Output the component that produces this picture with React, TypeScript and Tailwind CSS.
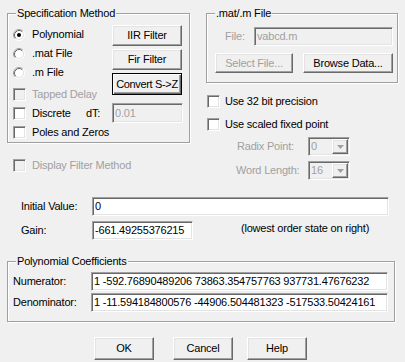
import React from "react";

const sunken =
  "border border-t-[#a0a0a0] border-l-[#a0a0a0] border-r-white border-b-white shadow-[inset_1px_1px_0_#696969,inset_-1px_-1px_0_#e3e3e3]";
const raised =
  "border border-t-white border-l-white border-r-[#696969] border-b-[#696969] shadow-[inset_-1px_-1px_0_#a0a0a0,inset_1px_1px_0_#e3e3e3] bg-[#f0f0f0]";
const dflt =
  "border border-black shadow-[inset_1px_1px_0_#fff,inset_-1px_-1px_0_#696969,inset_-2px_-2px_0_#a0a0a0] bg-[#f0f0f0]";

function Check({ disabled }: { disabled?: boolean }) {
  return (
    <span
      className={`block w-[13px] h-[13px] shrink-0 ${sunken} ${disabled ? "bg-[#f0f0f0]" : "bg-white"}`}
    />
  );
}

function Radio({ checked }: { checked?: boolean }) {
  return (
    <span className="flex w-[13px] shrink-0">
      <svg width="12" height="12" viewBox="0 0 12 12">
        <circle cx="6" cy="6" r="4.5" fill="#fff" />
        <path d="M2.11 9.89A5.5 5.5 0 0 1 9.89 2.11" stroke="#a0a0a0" fill="none" />
        <path d="M9.89 2.11A5.5 5.5 0 0 1 2.11 9.89" stroke="#fff" fill="none" />
        <path d="M2.82 9.18A4.5 4.5 0 0 1 9.18 2.82" stroke="#696969" fill="none" />
        <path d="M9.18 2.82A4.5 4.5 0 0 1 2.82 9.18" stroke="#e3e3e3" fill="none" />
        {checked && <circle cx="6" cy="6" r="2" fill="#000" />}
      </svg>
    </span>
  );
}

function Group({
  label,
  className,
  children,
}: {
  label: string;
  className: string;
  children?: React.ReactNode;
}) {
  return (
    <div
      className={`relative border border-[#a0a0a0] shadow-[1px_1px_0_#fff,inset_1px_1px_0_#fff] ${className}`}
    >
      <span className="absolute left-[8px] top-[-7px] bg-[#f0f0f0] px-[1px] leading-[13px] whitespace-nowrap">
        {label}
      </span>
      {children}
    </div>
  );
}

function Edit({
  value,
  className,
  disabled,
}: {
  value: string;
  className: string;
  disabled?: boolean;
}) {
  return (
    <div
      className={`flex items-center pl-[2px] whitespace-nowrap overflow-hidden ${sunken} ${
        disabled ? "bg-[#f0f0f0] text-[#a0a0a0]" : "bg-white text-black"
      } ${className}`}
    >
      {value}
    </div>
  );
}

function Btn({
  label,
  className,
  disabled,
  def,
}: {
  label: string;
  className: string;
  disabled?: boolean;
  def?: boolean;
}) {
  return (
    <div
      className={`flex items-center justify-center whitespace-nowrap ${def ? dflt : raised} ${
        disabled ? "text-[#a0a0a0]" : "text-black"
      } ${className}`}
    >
      {label}
    </div>
  );
}

function Combo({ value }: { value: string }) {
  return (
    <div className={`flex items-center w-[42px] h-[19px] bg-[#f0f0f0] ${sunken}`}>
      <span className="flex-1 pl-[2px] text-[#a0a0a0]">{value}</span>
      <span
        className={`flex items-center justify-center w-[16px] h-[15px] mr-[1px] ${raised}`}
      >
        <svg width="7" height="4" viewBox="0 0 7 4">
          <path d="M0 0H7L3.5 4Z" fill="#a0a0a0" />
        </svg>
      </span>
    </div>
  );
}

export default function App() {
  return (
    <div className="w-[405px] h-[362px] bg-[#f0f0f0] overflow-hidden pt-[13px] pl-[7px] text-[11px] leading-[13px] tracking-[-0.2px] text-black font-['Liberation_Sans',Arial,sans-serif]">
      {/* top area */}
      <div className="flex">
        {/* left column */}
        <div className="w-[183px]">
          <Group label="Specification Method" className="w-[183px] h-[130px]">
            <div className="pl-[5px] pt-[11px]">
              <div className="flex">
                <div className="w-[99px]">
                  <div className="flex items-center h-[19px] gap-[6px]">
                    <Radio checked />
                    <span>Polynomial</span>
                  </div>
                  <div className="flex items-center h-[19px] gap-[6px]">
                    <Radio />
                    <span>.mat File</span>
                  </div>
                  <div className="flex items-center h-[19px] gap-[6px]">
                    <Radio />
                    <span>.m File</span>
                  </div>
                  <div className="flex items-center h-[17px] mt-[4px] gap-[6px]">
                    <Check disabled />
                    <span className="text-[#a0a0a0] whitespace-nowrap">Tapped Delay</span>
                  </div>
                </div>
                <div className="flex flex-col gap-[3px] w-[70px]">
                  <Btn label="IIR Filter" className="h-[21px]" />
                  <Btn label="Fir Filter" className="h-[21px]" />
                  <Btn label="Convert S->Z" className="h-[22px] tracking-[-0.35px]" def />
                </div>
              </div>
              <div className="flex items-center h-[20px]">
                <Check />
                <span className="ml-[6px] w-[54px]">Discrete</span>
                <span className="w-[26px]">dT:</span>
                <Edit value="0.01" className="w-[71px] h-[20px]" disabled />
              </div>
              <div className="flex items-center h-[18px] gap-[6px]">
                <Check />
                <span>Poles and Zeros</span>
              </div>
            </div>
          </Group>
          <div className="flex items-center h-[18px] mt-[13px] pl-[6px] gap-[6px]">
            <Check disabled />
            <span className="text-[#a0a0a0]">Display Filter Method</span>
          </div>
        </div>

        {/* right column */}
        <div className="ml-[16px] w-[192px]">
          <Group label=".mat/.m File" className="w-[192px] h-[70px]">
            <div className="flex items-center h-[19px] mt-[13px] pl-[18px]">
              <span className="w-[29px] text-[#a0a0a0]">File:</span>
              <Edit value="vabcd.m" className="w-[139px] h-[19px]" disabled />
            </div>
            <div className="flex h-[20px] mt-[7px] pl-[8px]">
              <Btn label="Select File..." className="w-[78px] h-[20px]" disabled />
              <Btn label="Browse Data..." className="ml-[10px] w-[90px] h-[20px]" />
            </div>
          </Group>
          <div className="flex items-center h-[18px] mt-[9px] pl-[1px] gap-[5px]">
            <Check />
            <span>Use 32 bit precision</span>
          </div>
          <div className="flex items-center h-[18px] mt-[5px] pl-[1px] gap-[5px]">
            <Check />
            <span>Use scaled fixed point</span>
          </div>
          <div className="flex items-center h-[19px] mt-[4px] pl-[31px]">
            <span className="w-[71px] text-[#a0a0a0]">Radix Point:</span>
            <Combo value="0" />
          </div>
          <div className="flex items-center h-[19px] mt-[5px] pl-[30px]">
            <span className="w-[72px] text-[#a0a0a0]">Word Length:</span>
            <Combo value="16" />
          </div>
        </div>
      </div>

      {/* initial value / gain */}
      <div className="flex items-center h-[19px] mt-[17px] pl-[14px]">
        <span className="w-[71px]">Initial Value:</span>
        <Edit value="0" className="w-[297px] h-[19px]" />
      </div>
      <div className="flex items-center h-[19px] mt-[5px] pl-[14px]">
        <span className="w-[71px]">Gain:</span>
        <Edit value="-661.49255376215" className="w-[101px] h-[19px]" />
        <span className="ml-[48px] mb-[4px]">(lowest order state on right)</span>
      </div>

      {/* polynomial coefficients */}
      <Group label="Polynomial Coefficients" className="mt-[21px] w-[388px] h-[61px]">
        <div className="pt-[10px] pl-[5px]">
          <div className="flex items-center h-[19px]">
            <span className="w-[78px]">Numerator:</span>
            <Edit
              value="1 -592.76890489206 73863.354757763 937731.47676232"
              className="w-[297px] h-[19px]"
            />
          </div>
          <div className="flex items-center h-[19px] mt-[2px]">
            <span className="w-[78px]">Denominator:</span>
            <Edit
              value="1 -11.594184800576 -44906.504481323 -517533.50424161"
              className="w-[297px] h-[19px]"
            />
          </div>
        </div>
      </Group>

      {/* dialog buttons */}
      <div className="flex mt-[15px]">
        <Btn label="OK" className="ml-[87px] w-[60px] h-[23px]" />
        <Btn label="Cancel" className="ml-[19px] w-[60px] h-[23px]" />
        <Btn label="Help" className="ml-[14px] w-[60px] h-[23px]" />
      </div>
    </div>
  );
}
